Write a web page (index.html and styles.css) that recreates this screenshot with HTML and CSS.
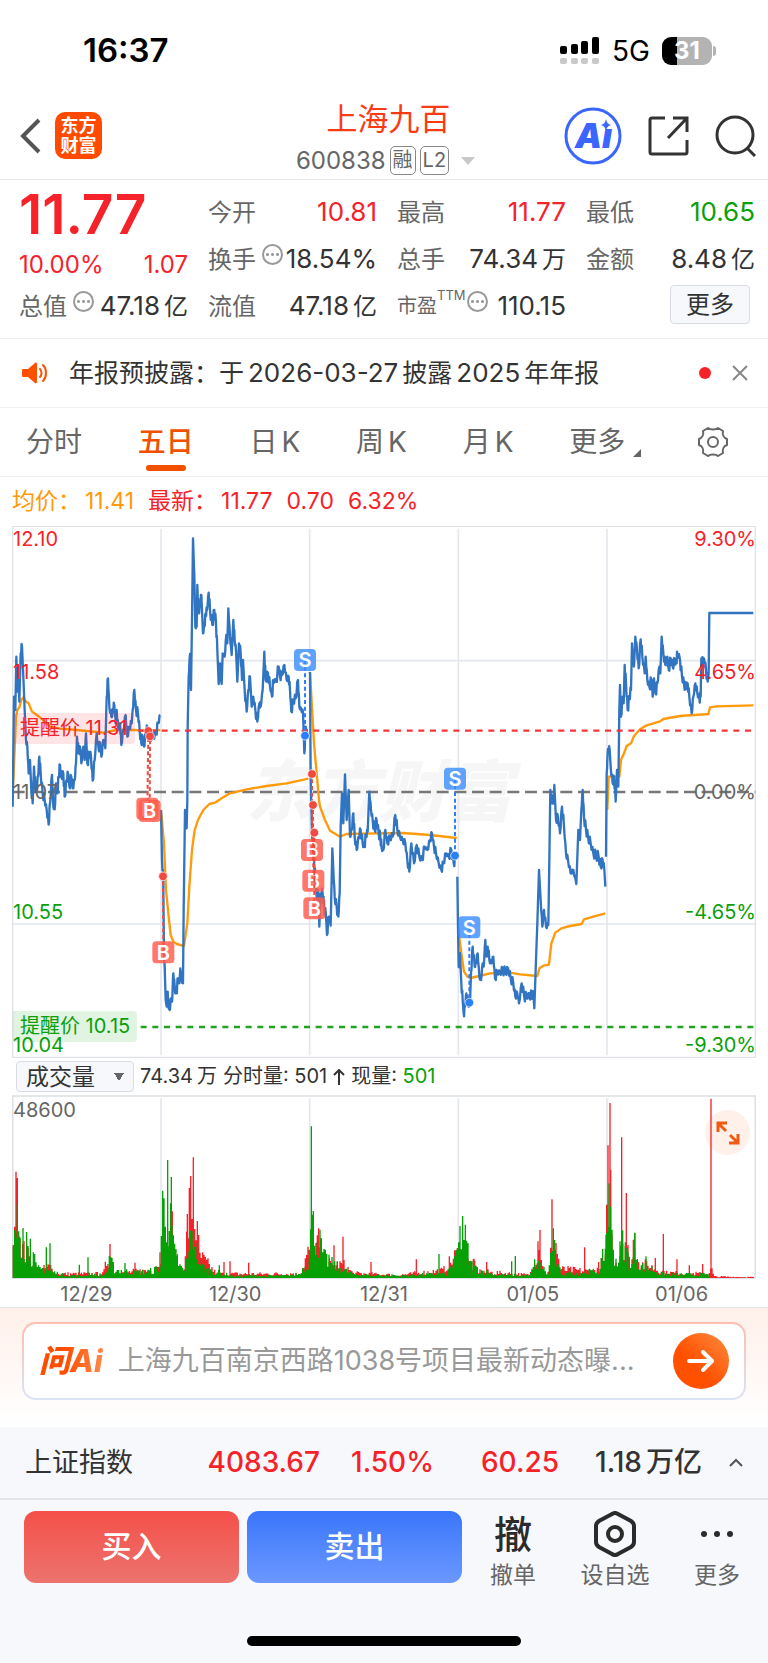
FILE: index.html
```html
<!DOCTYPE html>
<html lang="zh-CN">
<head>
    <meta charset="UTF-8">
    <meta name="viewport" content="width=device-width, initial-scale=1.0">
    <title>上海九百 600838</title>
    <link rel="stylesheet" href="styles.css">
</head>
<body>
    <div class="status-bar">
        <span class="clock">16:37</span>
        <div class="status-icons">
            <svg width="40" height="28" viewBox="0 0 40 28">
                <g fill="#000">
                    <rect x="0" y="9" width="7" height="8" rx="2"/>
                    <rect x="11" y="7" width="7" height="10" rx="2"/>
                    <rect x="21" y="4" width="7" height="13" rx="2"/>
                    <rect x="32" y="0" width="7" height="17" rx="2"/>
                </g>
                <g fill="#c9c9c9">
                    <rect x="0" y="21" width="7" height="6" rx="2"/>
                    <rect x="11" y="21" width="7" height="6" rx="2"/>
                    <rect x="21" y="21" width="7" height="6" rx="2"/>
                    <rect x="32" y="21" width="7" height="6" rx="2"/>
                </g>
            </svg>
            <span class="network">5G</span>
            <span class="battery">31</span>
        </div>
    </div>

    <header class="header">
        <div class="header-left">
            <button class="icon-btn" aria-label="返回">
                <svg width="22" height="36" viewBox="0 0 22 36" fill="none" stroke="#555" stroke-width="4"><path d="M19 2 3 18l16 16"/></svg>
            </button>
            <div class="logo">东方<br>财富</div>
        </div>
        <div class="header-title">
            <h1>上海九百</h1>
            <div class="code">
                <span>600838</span>
                <span class="tag">融</span>
                <span class="tag">L2</span>
                <svg width="14" height="8" viewBox="0 0 14 8"><path d="M0 0h14L7 8z" fill="#c8c8c8"/></svg>
            </div>
        </div>
        <div class="header-right">
            <button class="icon-btn" aria-label="Ai">
                <svg width="58" height="58" viewBox="0 0 58 58">
                    <circle cx="29" cy="29" r="27" fill="none" stroke="#3a66ff" stroke-width="3"/>
                    <text class="ai-text" x="11" y="41">Aı</text>
                    <path d="M42 12c1 4 2 5 5 6-3 1-4 2-5 6-1-4-2-5-5-6 3-1 4-2 5-6z" fill="#3a66ff"/>
                </svg>
            </button>
            <button class="icon-btn" aria-label="分享">
                <svg width="41" height="42" viewBox="0 0 41 42" fill="none" stroke="#333" stroke-width="3">
                    <path d="M17 3H4a2 2 0 0 0-2 2v32a2 2 0 0 0 2 2h33a2 2 0 0 0 2-2V25"/>
                    <path d="M25 3h14v14M39 3 20 23"/>
                </svg>
            </button>
            <button class="icon-btn" aria-label="搜索">
                <svg width="42" height="42" viewBox="0 0 42 42" fill="none" stroke="#333" stroke-width="3">
                    <circle cx="20" cy="20" r="18"/>
                    <path d="m32 33 8 8"/>
                </svg>
            </button>
        </div>
    </header>

    <section class="quote">
        <div class="price">11.77</div>
        <div class="cell"><span>今开</span><b class="up">10.81</b></div>
        <div class="cell"><span>最高</span><b class="up">11.77</b></div>
        <div class="cell"><span>最低</span><b class="down">10.65</b></div>

        <div class="cell change"><b class="up">10.00%</b><b class="up">1.07</b></div>
        <div class="cell"><span>换手</span><i class="more-dot"></i><b>18.54%</b></div>
        <div class="cell"><span>总手</span><b>74.34<u>万</u></b></div>
        <div class="cell"><span>金额</span><b>8.48<u>亿</u></b></div>

        <div class="cell"><span>总值</span><i class="more-dot"></i><b>47.18<u>亿</u></b></div>
        <div class="cell"><span>流值</span><b>47.18<u>亿</u></b></div>
        <div class="cell"><span class="pe">市盈</span><small>TTM</small><i class="more-dot"></i><b>110.15</b></div>
        <div class="cell cell-more"><button class="more-btn">更多</button></div>
    </section>

    <section class="notice">
        <svg width="26" height="22" viewBox="0 0 26 22">
            <path d="M1 7h5l7-6c1-1 2 0 2 1v18c0 1-1 2-2 1l-7-6H1c-1 0-1-1-1-1V8s0-1 1-1z" fill="#ff5000"/>
            <path d="M18 7c2 2 2 6 0 8M21 3c4 4 4 12 0 16" fill="none" stroke="#ff5000" stroke-width="2" stroke-linecap="round"/>
        </svg>
        <p>年报预披露：于<u>2026-03-27</u>披露<u>2025</u>年年报</p>
        <span class="dot"></span>
        <button class="icon-btn" aria-label="关闭">
            <svg width="16" height="16" viewBox="0 0 16 16" stroke="#888" stroke-width="2"><path d="m1 1 14 14M15 1 1 15"/></svg>
        </button>
    </section>

    <nav class="tabs">
        <button>分时</button>
        <button class="active">五日</button>
        <button>日<u>K</u></button>
        <button>周<u>K</u></button>
        <button>月<u>K</u></button>
        <button class="tab-more">更多<svg width="8" height="8" viewBox="0 0 8 8"><path d="M8 0v8H0z" fill="#666"/></svg></button>
        <button class="tab-gear" aria-label="设置">
            <svg width="32" height="32" viewBox="0 0 32 32" fill="none" stroke="#666" stroke-width="2">
                <path d="M11 2c2 2 8 2 10 0l5 3c-1 4 1 7 4 8v6c-3 1-5 4-4 8l-5 3c-2-2-8-2-10 0l-5-3c1-4-1-7-4-8v-6c3-1 5-4 4-8z" stroke-linejoin="round"/>
                <circle cx="16" cy="16" r="5"/>
            </svg>
        </button>
    </nav>

    <main>
        <div class="legend">
            <span class="avg">均价：<u>11.41</u></span>
            <span>最新：<u>11.77</u></span>
            <span>0.70</span>
            <span>6.32%</span>
        </div>

        <div class="chart">
            <!-- 3 chart units per css pixel at full width -->
            <svg id="priceChart" viewBox="36 48 2232 1596">
                <text class="watermark" x="1137" y="918">东方财富</text>
                <g stroke="#e4e8ee" stroke-width="5">
                    <path d="M483 56V1636M929 56V1636M1375 56V1636M1821 56V1636M38 452H2266M38 1242H2266"/>
                </g>
                <path d="M38 49H2266V1642H38z" fill="none" stroke="#dfe2e6" stroke-width="4"/>
                <path d="M38 846H2266" stroke="#777" stroke-width="7" stroke-dasharray="36 17"/>
                <path id="avgLine" fill="none" stroke="#ff9a0a" stroke-width="7" stroke-linejoin="round"/>
                <path id="priceLine" fill="none" stroke="#3074c2" stroke-width="7" stroke-linejoin="round"/>
                <path d="M415 662H2266" stroke="#f6343a" stroke-width="7" stroke-dasharray="18 17"/>
                <path d="M422 1551H2266" stroke="#1fa51f" stroke-width="7" stroke-dasharray="18 17"/>
                <g id="markers"></g>
            </svg>
            <span class="axis axis-1 up">12.10</span>
            <span class="axis axis-2 up">11.58</span>
            <span class="axis axis-3">11.07</span>
            <span class="axis axis-4 down">10.55</span>
            <span class="axis axis-5 down">10.04</span>
            <span class="axis right axis-1 up">9.30%</span>
            <span class="axis right axis-2 up">4.65%</span>
            <span class="axis right axis-3">0.00%</span>
            <span class="axis right axis-4 down">-4.65%</span>
            <span class="axis right axis-5 down">-9.30%</span>
            <span class="alert alert-high">提醒价 11.31</span>
            <span class="alert alert-low">提醒价 10.15</span>
        </div>

        <div class="indicator">
            <select aria-label="指标">
                <option>成交量</option>
            </select>
            <span>74.34<u>万</u></span>
            <span>分时量: 501</span>
            <svg width="12" height="16" viewBox="0 0 12 16" fill="none" stroke="#333" stroke-width="2"><path d="M6 16V1M1 6l5-5 5 5"/></svg>
            <span>现量: <b class="down">501</b></span>
        </div>

        <div class="chart">
            <svg id="volumeChart" viewBox="36 135 2232 552">
                <path d="M483 145V684M929 145V684M1375 145V684M1821 145V684" stroke="#e4e8ee" stroke-width="5"/>
                <path d="M38 138H2266V686H38z" fill="none" stroke="#dcdfe3" stroke-width="5"/>
                <path id="volUp" stroke="#f5222a" stroke-width="4"/>
                <path id="volDown" stroke="#06a006" stroke-width="4"/>
            </svg>
            <span class="axis vol-max">48600</span>
            <button class="expand" aria-label="全屏">
                <svg width="24" height="24" viewBox="0 0 24 24" fill="none" stroke="#f0590f" stroke-width="3"><path d="M11 2H2v9M2 2l8 8M13 22h9v-9M22 22l-8-8"/></svg>
            </button>
        </div>

        <div class="dates">
            <span>12/29</span><span>12/30</span><span>12/31</span><span>01/05</span><span>01/06</span>
        </div>
    </main>

    <section class="ask">
        <form class="ask-box">
            <label for="askInput" class="ask-logo">问Ai</label>
            <input id="askInput" type="text" placeholder="上海九百南京西路1038号项目最新动态曝...">
            <button type="button" class="ask-send" aria-label="发送">
                <svg width="28" height="24" viewBox="0 0 28 24" fill="none" stroke="#fff" stroke-width="4" stroke-linecap="round" stroke-linejoin="round"><path d="M2 12h23M16 3l9 9-9 9"/></svg>
            </button>
        </form>
    </section>

    <section class="index-strip">
        <span>上证指数</span>
        <b class="up">4083.67</b>
        <b class="up">1.50%</b>
        <b class="up">60.25</b>
        <b>1.18<u>万亿</u></b>
        <svg width="14" height="9" viewBox="0 0 14 9" fill="none" stroke="#555" stroke-width="2"><path d="m1 8 6-6 6 6"/></svg>
    </section>

    <footer class="trade">
        <div class="trade-row">
            <button class="trade-btn buy">买入</button>
            <button class="trade-btn sell">卖出</button>
            <button class="tool"><strong>撤</strong><span>撤单</span></button>
            <button class="tool">
                <svg width="42" height="46" viewBox="0 0 42 46" fill="none" stroke="#2b2b2b" stroke-width="4">
                    <path d="M18 3q3-2 6 0l13 7q3 2 3 5v16q0 3-3 5l-13 7q-3 2-6 0L5 36q-3-2-3-5V15q0-3 3-5z"/>
                    <circle cx="21" cy="23" r="7"/>
                </svg>
                <span>设自选</span>
            </button>
            <button class="tool">
                <svg width="34" height="46" viewBox="0 0 34 46" fill="#2b2b2b"><circle cx="4" cy="23" r="3"/><circle cx="17" cy="23" r="3"/><circle cx="30" cy="23" r="3"/></svg>
                <span>更多</span>
            </button>
        </div>
        <div class="home-bar"></div>
    </footer>

    <script src="chart.js"></script>
</body>
</html>
```

FILE: styles.css
```css
* {
    box-sizing: border-box;
}
body {
    margin: 0;
    background: #fff;
    color: #333;
    font-family: Inter, "Noto Sans CJK SC", sans-serif;
    font-size: 24px;
    line-height: 1.25;
}
button, input, select {
    font: inherit;
    color: inherit;
    margin: 0;
    padding: 0;
    border: 0;
    background: none;
}
b {
    font-weight: 400;
}
/* small breathing space between latin and chinese text */
u {
    text-decoration: none;
    margin-left: 4px;
}
svg {
    display: block;
    flex: none;
}
.up {
    color: #f5222a;
}
.down {
    color: #0aa00a;
}
.icon-btn {
    display: block;
    flex: none;
}

.status-bar {
    display: flex;
    justify-content: space-between;
    align-items: center;
    height: 92px;
    padding: 10px 56px 0 83px;
    color: #000;
}
.clock {
    font-size: 33px;
    font-weight: 600;
}
.status-icons {
    display: flex;
    align-items: center;
    gap: 12px;
}
.network {
    font-size: 28px;
}
.battery {
    position: relative;
    width: 50px;
    height: 28px;
    border-radius: 9px;
    background: linear-gradient(90deg, #000 31%, #b3b3b3 31%);
    color: #fff;
    font-size: 24px;
    font-weight: 700;
    line-height: 28px;
    text-align: center;
}
.battery::after {
    content: "";
    position: absolute;
    right: -4px;
    top: 9px;
    width: 3px;
    height: 10px;
    border-radius: 0 3px 3px 0;
    background: #b3b3b3;
}

.header {
    display: grid;
    grid-template-columns: 1fr auto 1fr;
    align-items: center;
    height: 88px;
    padding: 0 11px 0 20px;
    border-bottom: 1px solid #e8e8e8;
}
.header-left {
    display: flex;
    align-items: center;
    gap: 13px;
}
.logo {
    width: 47px;
    height: 47px;
    padding-top: 4px;
    border-radius: 10px;
    background: #ff4a00;
    color: #fff;
    font-size: 18px;
    font-weight: 700;
    line-height: 20px;
    text-align: center;
}
.header-title {
    display: flex;
    flex-direction: column;
    align-items: center;
    gap: 8px;
    padding-top: 4px;
}
.header-title h1 {
    margin: 0;
    color: #fa3c14;
    font-size: 31px;
    font-weight: 400;
    line-height: 38px;
}
.code {
    display: flex;
    align-items: center;
    gap: 4px;
    margin-right: 6px;
    color: #666;
    line-height: 30px;
}
.tag {
    height: 29px;
    padding: 0 2px;
    border: 1px solid #888;
    border-radius: 5px;
    font-size: 20px;
    line-height: 27px;
}
.code svg {
    margin-left: 8px;
}
.header-right {
    display: flex;
    justify-content: flex-end;
    align-items: center;
    gap: 26px;
}
.ai-text {
    fill: #3a66ff;
    font-size: 34px;
    font-weight: 900;
    font-style: italic;
}

.quote {
    display: grid;
    grid-template-columns: repeat(4, 1fr);
    grid-auto-rows: 47px;
    column-gap: 20px;
    padding: 9px 13px 8px 19px;
    border-bottom: 1px solid #ececec;
}
.price {
    color: #f5222a;
    font-size: 55px;
    font-weight: 600;
    line-height: 50px;
}
.cell {
    display: flex;
    align-items: center;
    white-space: nowrap;
}
.cell span {
    color: #666;
}
.cell b {
    margin-left: auto;
    font-size: 26px;
}
.cell b u {
    font-size: 24px;
}
.cell.change {
    padding-top: 10px;
}
.cell.change b {
    font-size: 24px;
}
.change b:first-child {
    margin-left: 0;
}
.more-dot {
    width: 21px;
    height: 21px;
    margin: 0 0 10px 6px;
    border: 2px solid #999;
    border-radius: 50%;
    background: radial-gradient(circle, #999 1px, transparent 2px) center / 5px 5px no-repeat,
        radial-gradient(circle, #999 1px, transparent 2px) 1px 6px / 5px 5px no-repeat,
        radial-gradient(circle, #999 1px, transparent 2px) 11px 6px / 5px 5px no-repeat;
}
.cell .pe {
    font-size: 20px;
}
.cell small {
    margin-bottom: 22px;
    color: #666;
    font-size: 13px;
}
.cell small + .more-dot {
    margin-left: 1px;
}
.cell-more {
    justify-content: flex-end;
    padding: 0 5px 4px 0;
}
.more-btn {
    width: 80px;
    height: 39px;
    border: 1px solid #d9dce2;
    border-radius: 4px;
    background: #f6f8fb;
}

.notice {
    display: flex;
    align-items: center;
    height: 69px;
    padding: 0 20px 0 22px;
    border-bottom: 1px solid #f0f0f0;
}
.notice p {
    flex: 1;
    margin: 0 0 0 21px;
    font-size: 25px;
    white-space: nowrap;
}
.notice u {
    margin: 0 4px;
    font-size: 26px;
}
.dot {
    width: 12px;
    height: 12px;
    margin-right: 21px;
    border-radius: 50%;
    background: #f5222a;
}

.tabs {
    display: flex;
    justify-content: space-between;
    height: 69px;
    padding: 0 39px 0 26px;
    border-bottom: 1px solid #f0f0f0;
    color: #666;
    font-size: 28px;
}
.tabs button {
    position: relative;
    white-space: nowrap;
}
.tabs .active {
    color: #f05000;
    font-weight: 500;
}
.active::after {
    content: "";
    position: absolute;
    left: 8px;
    right: 8px;
    bottom: 5px;
    height: 6px;
    border-radius: 3px;
    background: #f05000;
}
.tab-more {
    display: flex;
    align-items: center;
}
.tab-more svg {
    margin: 22px 0 0 8px;
}

main {
    padding: 0 12px;
}
.legend {
    display: flex;
    align-items: center;
    gap: 14px;
    height: 49px;
    color: #f5222a;
    font-size: 23px;
}
.avg {
    color: #ff9a0a;
}
.chart {
    position: relative;
}
.chart svg {
    width: 100%;
    height: auto;
}
.watermark {
    fill: #f6f6f6;
    font-size: 200px;
    font-weight: 900;
    font-style: italic;
    text-anchor: middle;
}
.marker {
    fill: #fff;
    font-size: 60px;
    font-weight: 600;
    text-anchor: middle;
}
.axis {
    position: absolute;
    left: 1px;
    color: #666;
    font-size: 20px;
    line-height: 26px;
}
.axis.up {
    color: #f5222a;
}
.axis.down {
    color: #0aa00a;
}
.axis.right {
    left: auto;
    right: 0;
}
.axis-1 {
    top: 0;
}
.axis-2 {
    top: 25%;
}
.axis-3 {
    top: 50%;
    transform: translateY(-50%);
}
.axis-4 {
    bottom: 25%;
}
.axis-5 {
    bottom: 0;
}
.vol-max {
    top: 2px;
}
.alert {
    position: absolute;
    left: 1px;
    padding: 0 7px;
    border-radius: 0 4px 4px 0;
    font-size: 20px;
    line-height: 31px;
}
.alert-high {
    bottom: 59%;
    background: rgba(245, 34, 42, 0.12);
    color: #f5222a;
}
.alert-low {
    bottom: 3%;
    background: rgba(10, 160, 10, 0.12);
    color: #0aa00a;
}
.expand {
    position: absolute;
    top: 15px;
    right: 6px;
    display: grid;
    place-items: center;
    width: 45px;
    height: 45px;
    border-radius: 50%;
    background: rgba(255, 90, 20, 0.09);
}
.chart .expand svg {
    width: 24px;
    height: 24px;
}
.indicator {
    display: flex;
    align-items: center;
    gap: 6px;
    height: 37px;
    padding-left: 4px;
    font-size: 20px;
    white-space: nowrap;
}
.indicator select {
    width: 118px;
    height: 31px;
    padding-left: 9px;
    border: 1px solid #d9dce2;
    border-radius: 4px;
    appearance: none;
    background: linear-gradient(to bottom right, #666 50%, transparent 50%) 102px 11px / 5px 8px no-repeat,
        linear-gradient(to bottom left, #666 50%, transparent 50%) 97px 11px / 5px 8px no-repeat,
        #f6f8fb;
    font-size: 23px;
    line-height: 28px;
}
.dates {
    display: grid;
    grid-template-columns: repeat(5, 1fr);
    height: 28px;
    color: #666;
    font-size: 20px;
    line-height: 30px;
    text-align: center;
}

.ask {
    padding: 14px 22px 27px;
    border-top: 1px solid #e3e3e3;
    background: linear-gradient(#fff0ea, #fff);
}
.ask-box {
    display: flex;
    align-items: center;
    gap: 15px;
    height: 78px;
    padding: 0 15px;
    border: 2px solid transparent;
    border-radius: 14px;
    background: linear-gradient(#fff, #fff) padding-box,
        linear-gradient(#ffbdb0, #dbe4f7) border-box;
}
.ask-logo {
    background: linear-gradient(90deg, #ff4d00 40%, #ff8a4c);
    background-clip: text;
    color: transparent;
    font-size: 31px;
    font-weight: 800;
    font-style: italic;
}
.ask-box input {
    flex: 1;
    min-width: 0;
    outline: 0;
    font-size: 27px;
}
.ask-box input::placeholder {
    color: #999;
    opacity: 1;
}
.ask-send {
    display: grid;
    place-items: center;
    flex: none;
    width: 56px;
    height: 56px;
    border-radius: 50%;
    background: linear-gradient(45deg, #ff5000 40%, #ff8c40);
}

.index-strip {
    display: grid;
    grid-template-columns: 110fr 185fr 114fr 125fr 143fr 41fr;
    align-items: center;
    height: 73px;
    padding: 0 25px;
    border-bottom: 2px solid #e3e5e8;
    background: #f6f8fb;
    font-size: 27px;
    white-space: nowrap;
}
.index-strip b {
    font-size: 28px;
    font-weight: 500;
    text-align: right;
}
.index-strip svg {
    justify-self: end;
}
.trade {
    background: #f6f8fb;
}
.trade-row {
    display: flex;
    align-items: flex-start;
    padding: 11px 0 0 24px;
}
.trade-btn {
    flex: 215;
    height: 72px;
    border-radius: 12px;
    color: #fff;
    font-size: 30px;
    font-weight: 500;
}
.buy {
    margin-right: 8px;
    background: linear-gradient(#f5504a, #ec736e);
}
.sell {
    background: linear-gradient(#3a76fa, #6b98ff);
}
.tool {
    display: flex;
    flex-direction: column;
    align-items: center;
    flex: 102;
    height: 84px;
    color: #666;
    font-size: 23px;
    line-height: 36px;
}
.tool strong {
    height: 46px;
    color: #2b2b2b;
    font-size: 38px;
    font-weight: 500;
    line-height: 46px;
}
.home-bar {
    width: 274px;
    height: 10px;
    margin: 41px auto 0;
    border-radius: 5px;
    background: #000;
}
.trade::after {
    content: "";
    display: block;
    height: 17px;
}
```

FILE: chart.js
```js
// one string per trading day, "x,y" pairs in chart units
const price = [
    '38,890 42,560 46,600 49,440 52,545 55,470 58,575 62,430 66,410 70,500 74,600 78,690 82,710 86,790 90,750 94,840 98,880 102,770 106,830 110,840 114,800 118,740 122,790 128,850 134,870 140,900 146,944 150,880 156,795 160,890 164,898 168,820 172,850 176,800 180,765 184,800 190,790 194,860 200,810 204,790 208,830 214,800 218,835 224,810 228,760 231,680 236,730 240,710 244,760 250,710 254,750 258,670 262,760 268,730 273,740 278,812 284,750 290,670 296,720 300,700 304,740 310,690 316,715 320,560 324,505 328,590 334,620 338,600 343,585 347,640 350,600 355,660 360,640 364,705 370,660 377,615 382,680 388,650 395,640 398,600 403,540 408,600 414,610 419,660 424,700 428,680 432,710 437,670 442,650 450,675 460,680 468,672 474,640 481,615',
    '483,900 486,1050 490,1110 490,1150 492,1330 494,1370 497,1470 500,1490 503,1445 506,1495 509,1500 513,1465 516,1475 520,1390 524,1430 529,1450 534,1405 538,1420 541,1375 545,1410 549,1420 551,1200 555,900 560,955 562,870 563,650 566,500 570,432 573,540 576,330 579,85 583,200 586,350 590,350 592,225 596,310 600,290 604,255 609,370 613,350 617,310 621,300 626,248 630,300 637,345 643,300 648,340 652,420 656,522 660,460 665,522 668,430 674,440 679,375 682,400 685,295 690,380 695,435 700,330 704,390 708,420 712,515 717,400 722,430 726,510 729,450 734,540 740,605 745,540 750,500 755,590 760,560 766,600 772,635 778,580 782,590 788,540 793,425 797,510 804,490 810,530 816,560 820,510 828,515 836,470 840,500 846,495 853,465 860,510 866,500 870,540 874,605 880,570 887,565 894,510 898,590 904,600 909,605 913,730 917,650 921,670',
    '930,486 932,800 936,970 942,1050 946,1110 950,1160 955,1150 958,1250 962,1150 968,1150 972,1190 978,1220 981,1275 986,1220 992,1247 997,1015 1000,1080 1004,1160 1010,1190 1015,1220 1019,1150 1022,950 1026,850 1030,940 1035,793 1040,930 1046,840 1050,980 1055,960 1060,910 1064,980 1070,1020 1076,980 1082,960 1088,1000 1093,1010 1098,975 1103,965 1108,845 1113,900 1118,930 1124,960 1130,930 1136,970 1141,980 1145,1015 1150,1020 1156,960 1162,1000 1170,980 1178,980 1186,915 1192,960 1200,980 1208,990 1216,1000 1222,1050 1228,1085 1234,1000 1242,1060 1250,1005 1258,1040 1266,1050 1274,1010 1282,1020 1290,990 1296,970 1302,1010 1308,1030 1316,1060 1324,1080 1330,1060 1338,1030 1346,1040 1354,1020 1361,1060 1367,1040',
    '1372,1100 1374,1250 1376,1370 1380,1330 1384,1420 1388,1470 1391,1510 1395,1490 1399,1450 1404,1480 1410,1478 1413,1390 1418,1310 1424,1370 1428,1360 1433,1330 1438,1400 1443,1410 1448,1360 1451,1370 1456,1290 1460,1340 1463,1310 1468,1350 1474,1360 1480,1340 1485,1405 1492,1385 1500,1390 1508,1375 1516,1390 1524,1375 1532,1405 1540,1420 1546,1460 1552,1450 1557,1480 1565,1420 1572,1455 1580,1465 1588,1450 1596,1460 1600,1450 1603,1495 1608,1350 1612,1240 1617,1080 1622,1170 1627,1250 1632,1200 1638,1250 1645,1245 1648,1050 1651,840 1656,870 1660,880 1663,825 1668,930 1674,920 1680,970 1686,890 1692,950 1698,1030 1704,1050 1712,1090 1720,1080 1729,1122 1735,960 1740,990 1744,900 1748,840 1752,920 1758,960 1764,980 1772,1000 1780,1030 1788,1035 1796,1040 1802,1070 1808,1050 1813,1080 1816,1130',
    '1818,1040 1820,790 1824,717 1829,718 1832,770 1838,820 1842,800 1847,875 1851,780 1855,830 1858,600 1860,525 1863,620 1868,560 1871,580 1874,465 1878,520 1883,600 1888,560 1893,540 1896,400 1902,470 1906,380 1911,420 1916,475 1922,388 1927,440 1934,490 1937,440 1942,510 1948,530 1954,510 1958,560 1962,505 1967,550 1972,520 1978,470 1981,490 1985,380 1990,430 1996,465 2002,440 2006,480 2012,445 2018,470 2024,450 2030,460 2031,425 2040,450 2046,500 2052,520 2058,535 2063,520 2068,560 2075,610 2080,560 2086,520 2092,550 2098,565 2102,560 2104,445 2109,460 2113,450 2118,480 2123,515 2126,490 2128,309 2260,309'
];
const average = [
    '38,860 48,620 52,600 58,592 64,570 70,562 78,575 86,580 96,605 106,612 120,622 134,635 150,650 180,656 230,660 310,668 350,660 400,660 440,662 481,660',
    '483,900 492,1000 498,1140 506,1220 512,1275 520,1295 530,1302 552,1308 562,1240 568,1130 576,1020 584,960 594,930 610,900 628,882 645,878 665,865 690,850 740,838 800,828 860,820 925,806',
    '930,486 942,700 957,870 960,890 975,930 990,962 1020,980 1040,972 1080,971 1210,969 1290,975 1370,984',
    '1374,1250 1384,1330 1392,1385 1402,1400 1412,1404 1450,1395 1470,1390 1530,1388 1560,1393 1612,1398 1618,1375 1630,1367 1647,1364 1654,1300 1666,1268 1684,1255 1710,1248 1745,1242 1752,1228 1780,1220 1816,1210',
    '1822,900 1826,800 1850,800 1858,800 1863,750 1872,730 1880,708 1893,700 1902,678 1920,658 1940,646 1980,634 1990,627 2040,618 2125,612 2130,592 2150,589 2260,586'
];

let seed = 7;
function rand() {
    seed = (seed * 16807) % 2147483647;
    return seed / 2147483647;
}

function parse(str) {
    return str.split(' ').map(p => p.split(',').map(Number));
}

// split the quiet segments and shake them a little, like minute ticks
function addTicks(points) {
    const out = [];
    points.forEach((p, i) => {
        const prev = points[i - 1];
        if (prev && p[0] - prev[0] > 3 && p[0] - prev[0] < 20 && Math.abs(p[1] - prev[1]) < 90) {
            const dy = (p[1] - prev[1]) / 3;
            const dx = (p[0] - prev[0]) / 3;
            const shake = 4 + rand() * 12;
            out.push([prev[0] + dx, prev[1] + dy + shake]);
            out.push([prev[0] + 2 * dx, prev[1] + 2 * dy - shake]);
        }
        out.push(p);
    });
    return out;
}

document.getElementById('priceLine').setAttribute('d', price.map(s => 'M' + addTicks(parse(s)).join('L')).join(''));
document.getElementById('avgLine').setAttribute('d', average.map(s => 'M' + s.replaceAll(' ', 'L')).join(''));

// trade markers: letter, box x, box y, dot x, dot y
const markers = [
    ['B', 442, 896, 445, 663], ['B', 449, 903, 450, 679], ['B', 490, 1327, 489, 1099],
    ['B', 936, 1020, 936, 792], ['B', 940, 1112, 939, 885], ['B', 943, 1195, 943, 968],
    ['S', 915, 450, 915, 677], ['S', 1365, 806, 1365, 1037], ['S', 1408, 1252, 1408, 1478]
];
document.getElementById('markers').innerHTML = markers.map(([type, x, y, dx, dy]) => {
    const box = type === 'B' ? '#ff5a4a' : '#3d8fff';
    const dot = type === 'B' ? '#f04a40' : '#2d7ff5';
    return `<path d="M${x} ${y}L${dx} ${dy}" stroke="${dot}" stroke-width="6" stroke-dasharray="12 8"/>
        <circle cx="${dx}" cy="${dy}" r="13" fill="${dot}" stroke="#fff" stroke-width="2"/>
        <rect x="${x - 33}" y="${y - 33}" width="66" height="66" rx="12" fill="${box}" fill-opacity="0.82"/>
        <text class="marker" x="${x}" y="${y + 22}">${type}</text>`;
}).join('');

// volume envelopes, then the single bars that stand out
const downEnv = '38,70 50,180 56,190 66,130 80,100 100,75 110,30 130,32 160,20 200,8 240,8 262,10 318,12 330,60 345,30 400,18 460,25 480,40 487,245 498,240 506,180 514,180 522,90 540,40 555,20 566,100 580,145 590,100 600,50 620,28 650,20 700,8 860,8 900,15 925,60 934,190 946,160 960,120 972,70 1000,45 1030,30 1060,12 1200,8 1340,15 1368,65 1380,140 1390,165 1400,110 1410,50 1430,30 1480,12 1590,8 1605,50 1625,40 1645,10 1658,140 1670,40 1690,14 1800,25 1818,120 1828,260 1835,140 1850,50 1868,120 1880,90 1895,30 1905,120 1920,40 1950,35 1980,15 2040,12 2124,12 2130,0 2262,0';
const upEnv = '38,180 48,260 54,290 62,110 90,60 110,20 150,40 165,14 310,14 326,80 335,40 345,15 400,22 470,25 482,90 490,60 515,40 530,60 545,20 556,60 563,180 572,270 582,240 590,160 600,75 625,45 650,14 900,14 925,90 932,60 955,130 970,40 1030,45 1060,16 1200,10 1330,26 1370,80 1385,60 1420,45 1440,22 1590,10 1612,100 1624,90 1632,10 1648,20 1656,160 1670,110 1680,30 1780,22 1816,60 1824,300 1832,300 1840,60 1856,60 1866,140 1880,120 1890,40 1902,100 1920,50 1960,35 2000,18 2124,14 2136,30 2142,5 2262,3';
const downSpikes = '69,150 80,138 91,118 139,92 150,104 264,62 238,40 375,45 503,354 514,303 658,38 934,455 987,70 1317,72 1388,186 1535,50 1546,66 1818,130 1827,284 1905,135 1938,65';
const upSpikes = '52,300 330,102 405,46 517,200 562,192 572,283 580,362 672,48 690,50 746,46 1002,98 1029,124 1113,48 1249,56 1372,90 1422,58 1460,48 1614,110 1620,144 1656,236 1754,92 1824,398 1830,525 1865,422 1879,255 1900,115 1990,132 1966,60 2031,56 2068,38 2108,42 2133,538';

function bars(env, spikes) {
    const points = parse(env);
    let d = '';
    let k = 0;
    for (let x = 40; x < 2262; x += 4) {
        while (k < points.length - 2 && points[k + 1][0] < x) k++;
        const [x0, y0] = points[k];
        const [x1, y1] = points[k + 1];
        const h = (y0 + (y1 - y0) * (x - x0) / (x1 - x0)) * (0.4 + rand() * 0.9);
        d += `M${x} 684v${-Math.max(h, 0).toFixed(0)}`;
    }
    parse(spikes).forEach(([x, h]) => {
        d += `M${x} 684v${-h}`;
    });
    return d;
}
document.getElementById('volUp').setAttribute('d', bars(upEnv, upSpikes));
document.getElementById('volDown').setAttribute('d', bars(downEnv, downSpikes));
```
